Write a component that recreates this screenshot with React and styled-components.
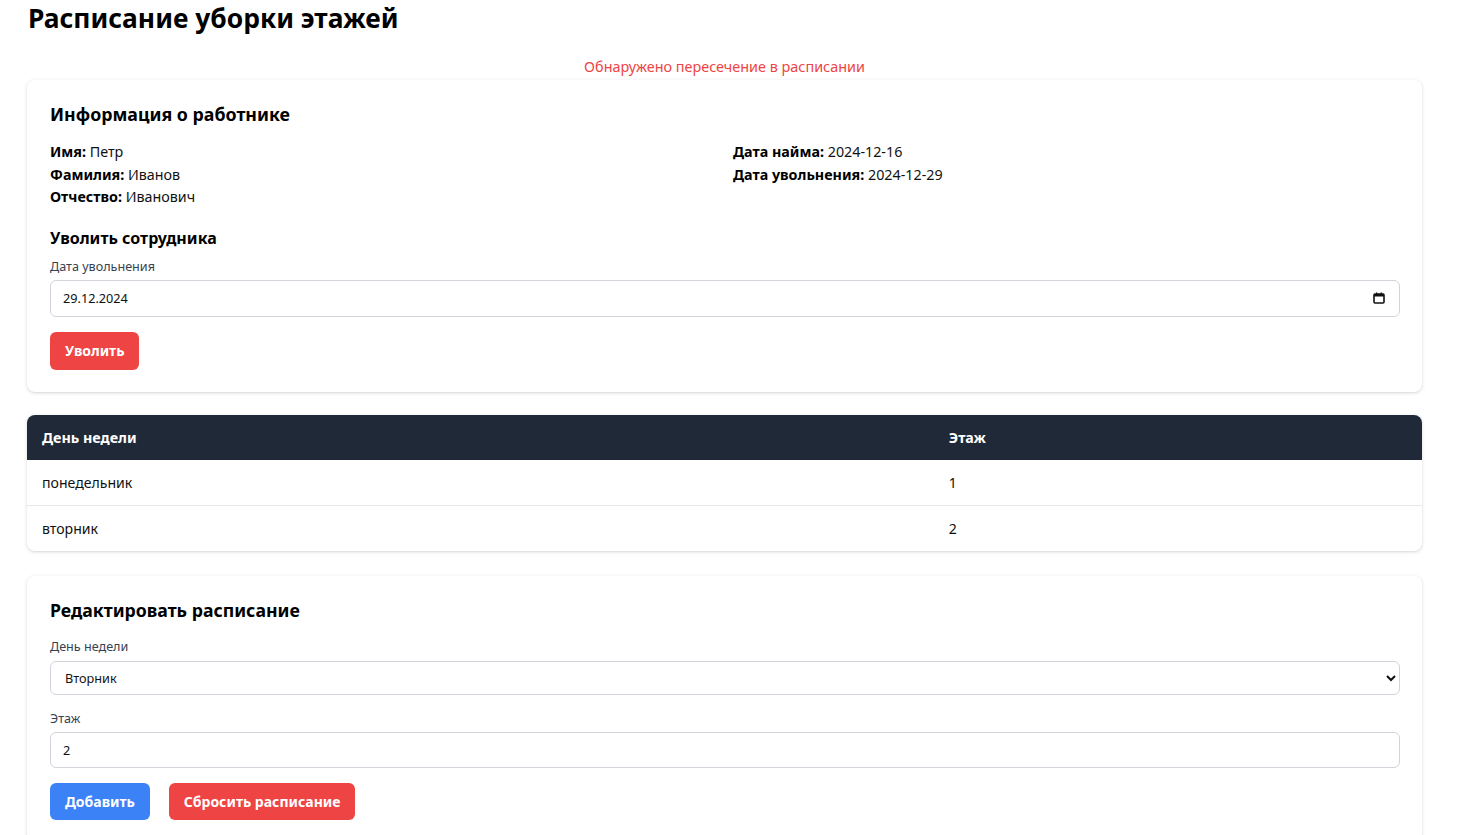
import React, { useState } from "react";
import styled, { createGlobalStyle } from "styled-components";

const GlobalStyle = createGlobalStyle`
  body {
    margin: 0;
    background: #ffffff;
    font-family: "Noto Sans", "Open Sans", Arial, sans-serif;
    color: #111111;
  }
  * { box-sizing: border-box; }
`;

const Page = styled.div`
  padding: 0 36px 40px 27px;
`;

const Title = styled.h1`
  margin: 0;
  padding-left: 1px;
  font-size: 26.4px;
  line-height: 36px;
  font-weight: 700;
  color: #000;
`;

const ErrorText = styled.div`
  margin-top: 21px;
  text-align: center;
  color: #ef4444;
  font-size: 14.4px;
  line-height: 20px;
`;

const Card = styled.section`
  margin-top: ${(p) => p.$top || 23}px;
  background: #fff;
  border-radius: 8px;
  box-shadow: 0 1px 4px rgba(0, 0, 0, 0.12), 0 1px 2px rgba(0, 0, 0, 0.06);
  padding: ${(p) => (p.$flush ? "0" : "22px 22px 22px 23px")};
  overflow: hidden;
`;

const Heading = styled.h2`
  margin: 0 0 ${(p) => p.$gap || 15}px;
  font-size: ${(p) => p.$size || 17.7}px;
  line-height: 24px;
  font-weight: 700;
  color: #000;
`;

const SubHeading = styled.h3`
  margin: 17px 0 8px;
  font-size: 16px;
  line-height: 24px;
  font-weight: 700;
  color: #000;
`;

const InfoGrid = styled.div`
  display: grid;
  grid-template-columns: 1fr 1fr;
  column-gap: 16px;
`;

const InfoLine = styled.div`
  font-size: 14.3px;
  line-height: 22.5px;
  color: #111;
  b { font-weight: 700; color: #000; }
`;

const Label = styled.label`
  display: block;
  font-size: 12.6px;
  line-height: 18px;
  color: #374151;
  margin: ${(p) => p.$top || 0}px 0 ${(p) => p.$bottom || 4}px;
`;

const Field = styled.div`
  position: relative;
`;

const TextInput = styled.input`
  display: block;
  width: 100%;
  height: ${(p) => p.$h || 37}px;
  padding: 0 12px;
  border: 1px solid #d1d5db;
  border-radius: 6px;
  font-family: "Noto Sans", Arial, sans-serif;
  font-size: 12.7px;
  color: #111;
  background: #fff;
  outline: none;
`;

const Select = styled.select`
  display: block;
  width: 100%;
  height: 34px;
  padding: 0 10px;
  border: 1px solid #d1d5db;
  border-radius: 6px;
  font-family: "Noto Sans", Arial, sans-serif;
  font-size: 12.7px;
  color: #111;
  background: #fff;
  outline: none;
`;

const CalendarIcon = styled.svg`
  position: absolute;
  right: 15px;
  top: 12px;
  width: 12px;
  height: 12px;
  pointer-events: none;
`;

const ButtonRow = styled.div`
  display: flex;
  gap: 19px;
  margin-top: 15px;
`;

const Button = styled.button`
  height: ${(p) => p.$h || 38}px;
  padding: 0 15px;
  border: none;
  border-radius: 6px;
  background: ${(p) => (p.$variant === "blue" ? "#3b82f6" : "#ef4444")};
  color: #fff;
  font-family: "Noto Sans", Arial, sans-serif;
  font-size: 14px;
  font-weight: 700;
  cursor: pointer;
`;

const Table = styled.table`
  width: 100%;
  border-collapse: collapse;
`;

const Th = styled.th`
  background: #1f2937;
  color: #fff;
  text-align: left;
  font-size: 14.3px;
  font-weight: 700;
  height: 45px;
  padding: 0 15px;
  width: ${(p) => p.$w || "auto"};
`;

const Td = styled.td`
  font-size: 14.1px;
  color: #111;
  height: 45.5px;
  padding: 0 15px;
  border-top: ${(p) => (p.$first ? "none" : "1px solid #e5e7eb")};
`;

const schedule = [
  { day: "понедельник", floor: 1 },
  { day: "вторник", floor: 2 },
];

const days = ["Понедельник", "Вторник", "Среда", "Четверг", "Пятница", "Суббота", "Воскресенье"];

const App = () => {
  const [day, setDay] = useState("Вторник");
  const [floor, setFloor] = useState("2");

  return (
    <Page>
      <GlobalStyle />
      <Title>Расписание уборки этажей</Title>
      <ErrorText>Обнаружено пересечение в расписании</ErrorText>

      <Card $top={3}>
        <Heading $size={17.8}>Информация о работнике</Heading>
        <InfoGrid>
          <div>
            <InfoLine><b>Имя:</b> Петр</InfoLine>
            <InfoLine><b>Фамилия:</b> Иванов</InfoLine>
            <InfoLine><b>Отчество:</b> Иванович</InfoLine>
          </div>
          <div>
            <InfoLine><b>Дата найма:</b> 2024-12-16</InfoLine>
            <InfoLine><b>Дата увольнения:</b> 2024-12-29</InfoLine>
          </div>
        </InfoGrid>
        <SubHeading>Уволить сотрудника</SubHeading>
        <Label>Дата увольнения</Label>
        <Field>
          <TextInput readOnly value="29.12.2024" />
          <CalendarIcon viewBox="0 0 12 12">
            <rect x="1" y="2" width="10" height="9" rx="1" fill="none" stroke="#111" strokeWidth="1.6" />
            <rect x="1" y="2" width="10" height="2.5" fill="#111" />
            <rect x="3" y="0.5" width="1.4" height="2" fill="#111" />
            <rect x="7.6" y="0.5" width="1.4" height="2" fill="#111" />
          </CalendarIcon>
        </Field>
        <ButtonRow>
          <Button>Уволить</Button>
        </ButtonRow>
      </Card>

      <Card $flush>
        <Table>
          <thead>
            <tr>
              <Th $w="65%">День недели</Th>
              <Th>Этаж</Th>
            </tr>
          </thead>
          <tbody>
            {schedule.map((row, i) => (
              <tr key={row.day}>
                <Td $first={i === 0}>{row.day}</Td>
                <Td $first={i === 0}>{row.floor}</Td>
              </tr>
            ))}
          </tbody>
        </Table>
      </Card>

      <Card $top={25}>
        <Heading $gap={16}>Редактировать расписание</Heading>
        <Label $bottom={5}>День недели</Label>
        <Select value={day} onChange={(e) => setDay(e.target.value)}>
          {days.map((d) => (
            <option key={d}>{d}</option>
          ))}
        </Select>
        <Label $top={15}>Этаж</Label>
        <TextInput $h={36} value={floor} onChange={(e) => setFloor(e.target.value)} />
        <ButtonRow>
          <Button $variant="blue" $h={37}>Добавить</Button>
          <Button $h={37}>Сбросить расписание</Button>
        </ButtonRow>
      </Card>
    </Page>
  );
};

export default App;
